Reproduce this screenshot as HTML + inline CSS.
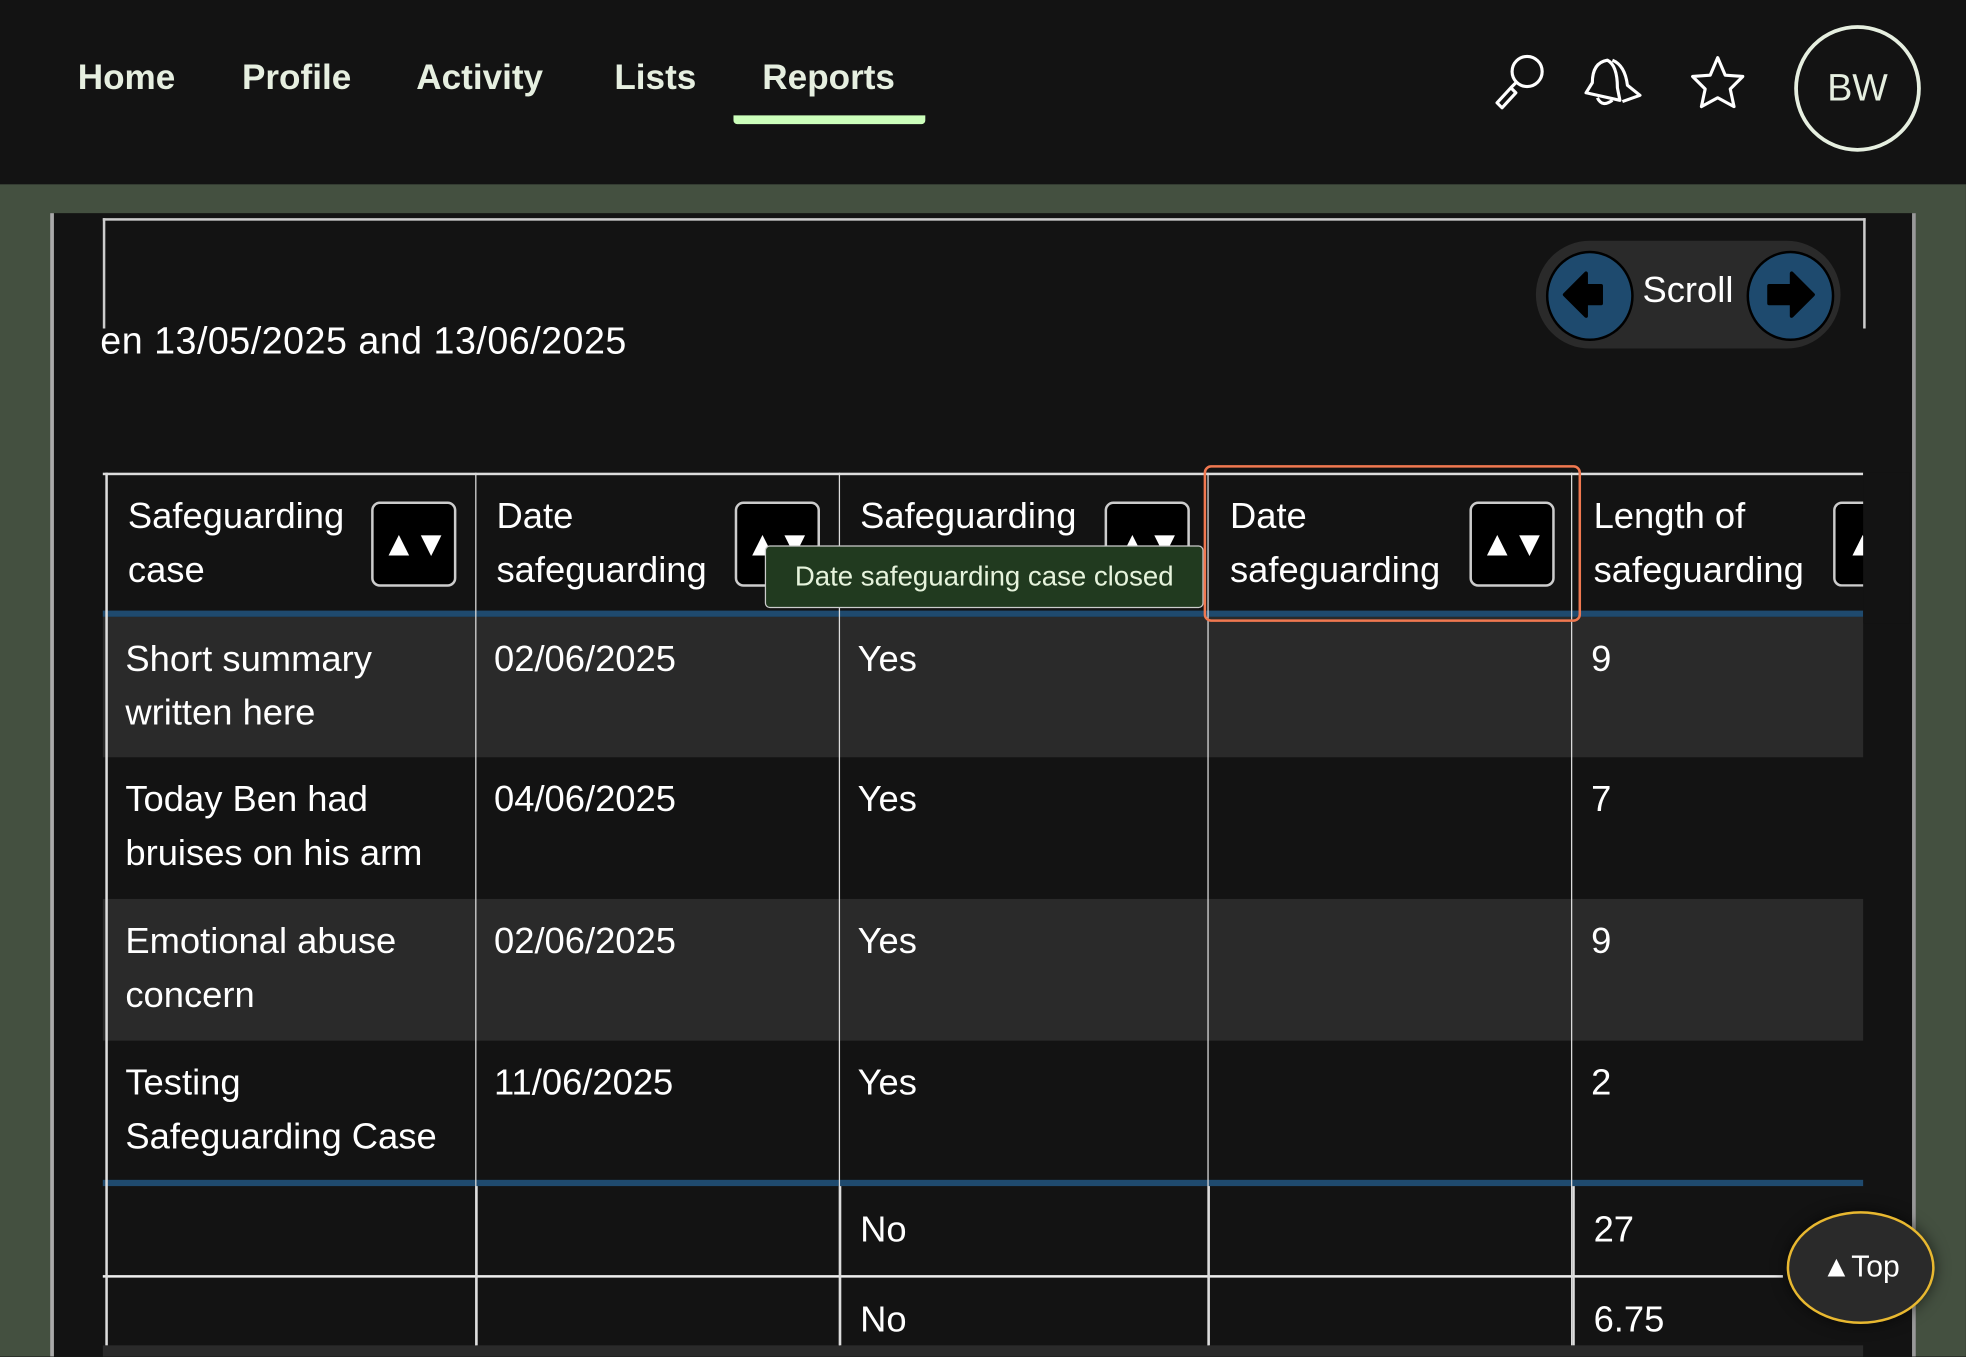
<!DOCTYPE html>
<html><head><meta charset="utf-8"><style>
html,body{margin:0;padding:0;background:#131313;overflow:hidden;width:1966px;height:1356px}
#s{position:absolute;left:0;top:0;width:1568px;height:1082px;transform:scale(1.2538);transform-origin:0 0;font-family:"Liberation Sans",sans-serif;color:#fff;background:#131313;overflow:hidden}
.a{position:absolute}
.nav{font-size:28px;font-weight:bold;color:#e6efe0;top:46px}
.t{font-size:29px;line-height:43px;position:absolute}
.vl{position:absolute;width:2px;background:#ddd}
.sort{position:absolute;width:64px;height:64px;background:#000;border:2px solid #ccc;border-radius:7px;color:#fff;font-size:28px;text-align:center;line-height:64px;letter-spacing:-2px}
</style></head><body><div id="s">
<div class="a nav" style="left:62px">Home</div>
<div class="a nav" style="left:193px">Profile</div>
<div class="a nav" style="left:332px">Activity</div>
<div class="a nav" style="left:490px">Lists</div>
<div class="a nav" style="left:608px">Reports</div>
<div class="a" style="left:585px;top:92px;width:153px;height:7px;background:#ccffbb;border-radius:0 0 3px 3px"></div>
<svg class="a" style="left:1190px;top:40px" width="210" height="50" viewBox="0 0 210 50" fill="none" stroke="#fff" stroke-width="2.5" stroke-linejoin="round">
<circle cx="28" cy="17" r="12"/>
<path d="M19 26 L15 30 M15 30 L4 42 L8 46 L19 34 Z"/>
<path d="M92 8 Q80 10 80 26 L75 34 L102 40 L100 30 Q100 12 92 8Z M84 38 Q88 46 96 40"/>
<path d="M96 8 Q106 12 108 28 L118 36 L104 41"/>
<path d="M180 6 L186 20 L200 21 L190 31 L193 45 L180 38 L167 45 L170 31 L160 21 L174 20 Z"/>
</svg>
<div class="a" style="left:1431px;top:20px;width:95px;height:95px;border:3px solid #e6efe0;border-radius:50%;text-align:center;line-height:95px;font-size:30px;color:#e6efe0">BW</div>
<div class="a" style="left:0;top:147px;width:1568px;height:935px;background:#445040"></div>
<div class="a" style="left:40px;top:170px;width:1488px;height:912px;background:#131313;border-left:3px solid #aaa;border-right:3px solid #999;box-sizing:border-box"></div>
<div class="a" style="left:82px;top:174px;width:1402px;height:86px;border:2px solid #ccc;border-bottom:none"></div>
<div class="a" style="left:80px;top:256px;font-size:30px;letter-spacing:0.4px;width:600px;overflow:hidden;white-space:nowrap">en 13/05/2025 and 13/06/2025</div>
<div class="a" style="left:1225px;top:192px;width:243px;height:86px;background:#2a2a2a;border-radius:43px"></div>
<div class="a" style="left:1233px;top:200px;width:66px;height:68px;background:#1e4a6e;border:2px solid #000;border-radius:50%"></div>
<div class="a" style="left:1393px;top:200px;width:66px;height:68px;background:#1e4a6e;border:2px solid #000;border-radius:50%"></div>
<svg class="a" style="left:1233px;top:200px" width="230" height="70"><path d="M15 35 L32 18 L32 28 L44 28 L44 42 L32 42 L32 52 Z" fill="#000" stroke="#000" stroke-width="3" stroke-linejoin="round"/><path d="M213 35 L196 18 L196 28 L178 28 L178 42 L196 42 L196 52 Z" fill="#000" stroke="#000" stroke-width="3" stroke-linejoin="round"/></svg>
<div class="a" style="left:1310px;top:216px;font-size:29px">Scroll</div>
<div class="a" style="left:82px;top:377px;width:1404px;height:2px;background:#ddd"></div>
<div class="a" style="left:82px;top:487px;width:1404px;height:5px;background:#1f4a6e"></div>
<div class="a" style="left:82px;top:492px;width:1404px;height:112px;background:#2a2a2a"></div>
<div class="a" style="left:82px;top:717px;width:1404px;height:113px;background:#2a2a2a"></div>
<div class="a" style="left:82px;top:941px;width:1404px;height:5px;background:#1f4a6e"></div>
<div class="a" style="left:82px;top:1017px;width:1340px;height:2px;background:#eee"></div>
<div class="a" style="left:82px;top:1073px;width:1404px;height:10px;background:#2a2a2a"></div>
<div class="vl" style="left:84px;top:377px;height:696px;width:2px"></div>
<div class="vl" style="left:379px;top:377px;height:696px;width:1px"></div>
<div class="vl" style="left:669px;top:377px;height:696px;width:1px"></div>
<div class="vl" style="left:963px;top:377px;height:696px;width:1px"></div>
<div class="vl" style="left:1253px;top:377px;height:696px;width:1px"></div>
<div class="vl" style="left:379px;top:946px;height:127px;width:2px"></div>
<div class="vl" style="left:669px;top:946px;height:127px;width:2px"></div>
<div class="vl" style="left:963px;top:946px;height:127px;width:2px"></div>
<div class="vl" style="left:1254px;top:946px;height:127px;width:2px"></div>
<div class="t" style="left:102px;top:391px">Safeguarding<br>case</div>
<div class="t" style="left:396px;top:391px">Date<br>safeguarding</div>
<div class="t" style="left:686px;top:391px">Safeguarding</div>
<div class="t" style="left:981px;top:391px">Date<br>safeguarding</div>
<div class="t" style="left:1271px;top:391px">Length of<br>safeguarding</div>
<div class="sort" style="left:296px;top:400px">▲▼</div>
<div class="sort" style="left:586px;top:400px">▲▼</div>
<div class="sort" style="left:881px;top:400px">▲▼</div>
<div class="sort" style="left:1172px;top:400px">▲▼</div>
<div class="a" style="left:1462px;top:400px;width:24px;height:64px;background:#000;border:2px solid #ccc;border-right:none;border-radius:7px 0 0 7px;overflow:hidden;font-size:28px;line-height:64px;color:#fff">&nbsp;▲</div>
<div class="a" style="left:1486px;top:377px;width:37px;height:120px;background:#131313"></div>
<div class="a" style="left:610px;top:435px;width:348px;height:48px;background:#213a1f;border:1px solid #ccc;border-radius:4px;font-size:22px;line-height:48px;text-align:center;color:#e6f3dc">Date safeguarding case closed</div>
<div class="a" style="left:960px;top:371px;width:297px;height:121px;border:2px solid #f07850;border-radius:6px"></div>
<div class="t" style="left:100px;top:505px">Short summary<br>written here</div>
<div class="t" style="left:394px;top:505px">02/06/2025</div>
<div class="t" style="left:684px;top:505px">Yes</div>
<div class="t" style="left:1269px;top:505px">9</div>
<div class="t" style="left:100px;top:617px">Today Ben had<br>bruises on his arm</div>
<div class="t" style="left:394px;top:617px">04/06/2025</div>
<div class="t" style="left:684px;top:617px">Yes</div>
<div class="t" style="left:1269px;top:617px">7</div>
<div class="t" style="left:100px;top:730px">Emotional abuse<br>concern</div>
<div class="t" style="left:394px;top:730px">02/06/2025</div>
<div class="t" style="left:684px;top:730px">Yes</div>
<div class="t" style="left:1269px;top:730px">9</div>
<div class="t" style="left:100px;top:843px">Testing<br>Safeguarding Case</div>
<div class="t" style="left:394px;top:843px">11/06/2025</div>
<div class="t" style="left:684px;top:843px">Yes</div>
<div class="t" style="left:1269px;top:843px">2</div>
<div class="t" style="left:686px;top:960px">No</div>
<div class="t" style="left:1271px;top:960px">27</div>
<div class="t" style="left:686px;top:1032px">No</div>
<div class="t" style="left:1271px;top:1032px">6.75</div>
<div class="a" style="left:1425px;top:966px;width:114px;height:86px;background:#2a2a2a;border:2px solid #e8b830;border-radius:50%;text-align:center;line-height:86px;font-size:24px;box-shadow:0 0 12px rgba(0,0,0,.6)">▲Top</div>
</div></body></html>
